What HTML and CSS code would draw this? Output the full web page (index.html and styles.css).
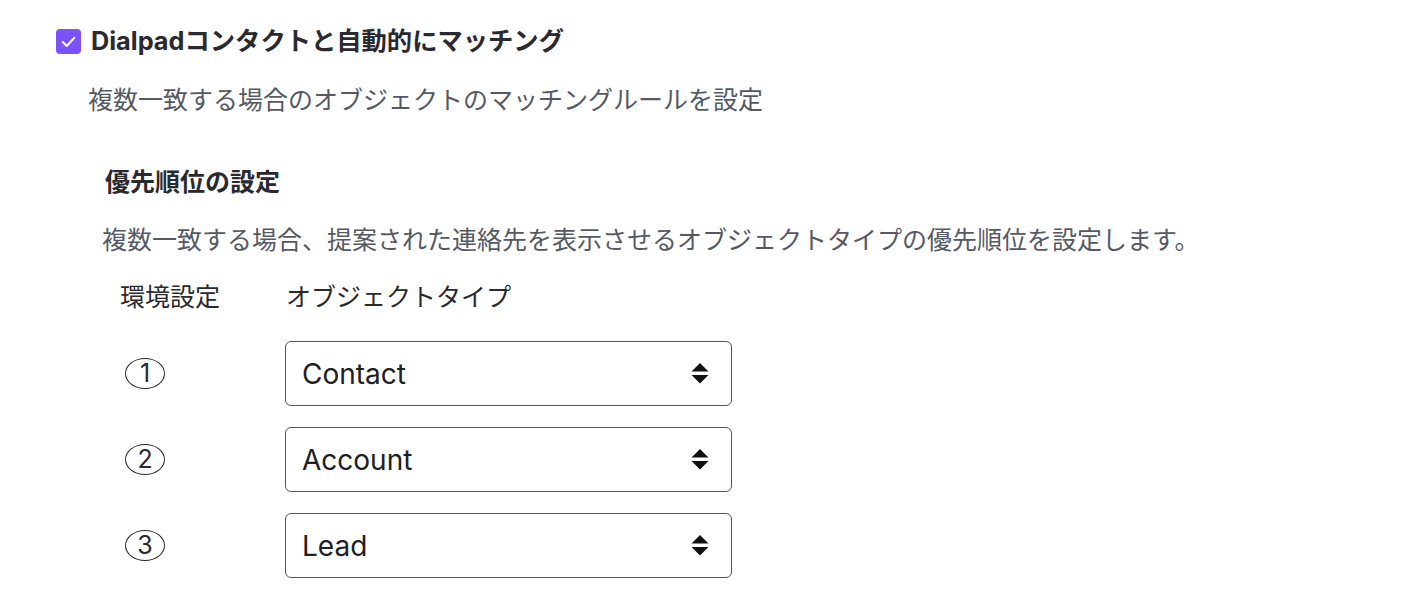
FILE: index.html
```html
<!DOCTYPE html>
<html lang="ja">
<head>
<meta charset="utf-8">
<link rel="stylesheet" href="styles.css">
</head>
<body>
<div class="page">
  <div class="check-row">
    <span class="checkbox">
      <svg viewBox="0 0 24 24" width="25" height="25"><path d="M6.5 12.5l3.8 3.8 7.4-8" fill="none" stroke="#fff" stroke-width="2" stroke-linecap="round" stroke-linejoin="round"/></svg>
    </span>
    <span class="title">Dialpadコンタクトと自動的にマッチング</span>
  </div>
  <p class="subtitle">複数一致する場合のオブジェクトのマッチングルールを設定</p>

  <h2 class="heading">優先順位の設定</h2>
  <p class="desc">複数一致する場合、提案された連絡先を表示させるオブジェクトタイプの優先順位を設定します。</p>

  <div class="table">
    <div class="col-head">環境設定</div>
    <div class="col-head">オブジェクトタイプ</div>

    <div class="num"><span class="circle">1</span></div>
    <div class="select"><span>Contact</span><svg class="arrows" viewBox="0 0 18 21" width="18" height="21"><path d="M9 0L17.5 8.5H0.5Z M0.5 12H17.5L9 20.5Z" fill="#111"/></svg></div>

    <div class="num"><span class="circle">2</span></div>
    <div class="select"><span>Account</span><svg class="arrows" viewBox="0 0 18 21" width="18" height="21"><path d="M9 0L17.5 8.5H0.5Z M0.5 12H17.5L9 20.5Z" fill="#111"/></svg></div>

    <div class="num"><span class="circle">3</span></div>
    <div class="select"><span>Lead</span><svg class="arrows" viewBox="0 0 18 21" width="18" height="21"><path d="M9 0L17.5 8.5H0.5Z M0.5 12H17.5L9 20.5Z" fill="#111"/></svg></div>
  </div>
</div>
</body>
</html>
```
FILE: styles.css
```css
html, body {
  margin: 0;
  padding: 0;
  background: #ffffff;
}
body {
  font-family: Inter, "Noto Sans CJK JP", sans-serif;
  color: #2a2930;
}
.page {
  padding: 23px 0 0 56px;
}
.check-row {
  display: flex;
  align-items: center;
  gap: 10px;
  height: 36px;
}
.checkbox {
  width: 25px;
  height: 25px;
  border-radius: 4px;
  background: #7c52ff;
  display: flex;
  align-items: center;
  justify-content: center;
}
.checkbox svg {
  display: block;
}
.title {
  font-size: 25.3px;
  font-weight: 700;
  line-height: 36px;
  color: #2a2930;
}
.subtitle {
  margin: 23px 0 0 32px;
  font-size: 25px;
  line-height: 36px;
  color: #555963;
}
.heading {
  margin: 46px 0 0 49px;
  font-size: 25px;
  line-height: 36px;
  font-weight: 700;
  color: #2a2930;
}
.desc {
  margin: 22px 0 0 46px;
  font-size: 25px;
  line-height: 36px;
  color: #555963;
}
.table {
  margin: 21px 0 0 64px;
  display: grid;
  grid-template-columns: 165px 447px;
  row-gap: 21px;
  align-items: center;
}
.col-head {
  font-size: 25px;
  line-height: 36px;
  color: #2a2930;
  margin-bottom: 5px;
}
.col-head:nth-child(2) {
  margin-left: 1px;
}
.num {
  padding-left: 5px;
}
.circle {
  display: flex;
  align-items: center;
  justify-content: center;
  width: 40px;
  height: 31px;
  border: 1px solid #2a2a2a;
  border-radius: 50%;
  box-sizing: border-box;
  font-size: 25px;
  line-height: 1;
  color: #2a2930;
}
.select {
  height: 65px;
  box-sizing: border-box;
  border: 1px solid #55555c;
  border-radius: 6px;
  display: flex;
  align-items: center;
  justify-content: space-between;
  padding: 0 22px 0 16px;
  font-size: 28px;
  color: #202024;
}
.arrows {
  display: block;
}
```
